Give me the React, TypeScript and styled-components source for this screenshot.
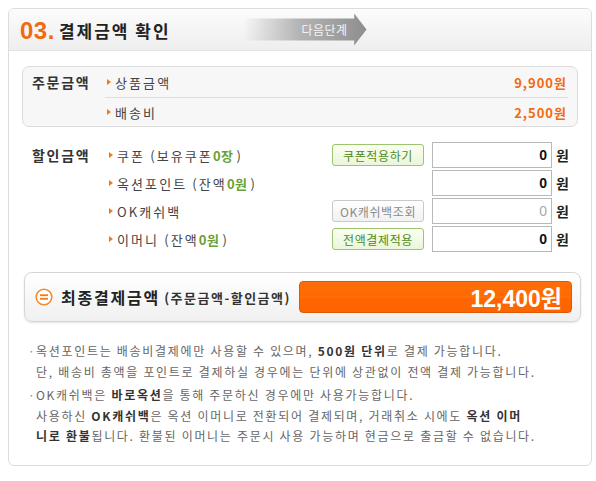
import React from 'react';
import styled, { createGlobalStyle } from 'styled-components';

const GlobalStyle = createGlobalStyle`
  body {
    margin: 0;
    background: #fff;
    font-family: "Noto Sans CJK KR", "Noto Sans", sans-serif;
    color: #333;
  }
`;

const Panel = styled.div`
  margin: 8px 0 0 8px;
  width: 582px;
  height: 456px;
  border: 1px solid #dcdcdc;
  border-radius: 6px;
  background: #fff;
  overflow: hidden;
`;

const Header = styled.div`
  height: 41px;
  display: flex;
  align-items: center;
  padding-left: 11px;
  background: linear-gradient(#fcfcfc, #eeeeee);
  border-bottom: 1px solid #e3e3e3;
`;

const StepNo = styled.span`
  font-family: "Liberation Sans", Arial, sans-serif;
  font-weight: 700;
  font-size: 24px;
  letter-spacing: 0.5px;
  color: #f26a10;
  margin-right: 4px;
  padding-top: 2px;
`;

const Title = styled.span`
  font-weight: 700;
  font-size: 17px;
  color: #222;
  letter-spacing: 2px;
  padding-top: 2px;
`;

const NextStep = styled.div`
  margin-left: 72px;
  width: 124px;
  height: 32px;
  display: flex;
  align-items: center;
  justify-content: flex-end;
  padding-right: 19px;
  box-sizing: border-box;
  font-size: 12px;
  color: #f4f4f4;
  letter-spacing: 0.5px;
  background: linear-gradient(to right, rgba(150, 150, 150, 0) 0%, #b4b4b4 45%, #8e8e8e 100%);
  clip-path: polygon(0 16%, 90% 16%, 90% 0, 100% 50%, 90% 100%, 90% 84%, 0 84%);
`;

const Body = styled.div`
  padding: 15px 13px 0 13px;
`;

const OrderBox = styled.div`
  display: grid;
  grid-template-columns: 73px 1fr;
  border: 1px solid #dddddd;
  border-radius: 7px;
  background: #f7f7f7;
  padding: 0 9px 0 9px;
`;

const GroupLabel = styled.div`
  font-weight: 700;
  font-size: 14px;
  color: #333;
  letter-spacing: 1.7px;
  line-height: 20px;
  white-space: nowrap;
`;

const OrderLabelCell = styled(GroupLabel)`
  padding-top: 5px;
`;

const OrderRows = styled.div`
  display: flex;
  flex-direction: column;
`;

const OrderRow = styled.div<{ $last?: boolean }>`
  display: flex;
  align-items: center;
  justify-content: space-between;
  height: ${({ $last }) => ($last ? '28px' : '30px')};
  border-bottom: ${({ $last }) => ($last ? 'none' : '1px solid #dedede')};
  padding-right: 1px;
`;

const Item = styled.span`
  display: inline-flex;
  align-items: center;
  font-size: 13px;
  color: #444;
  letter-spacing: 2.1px;
  white-space: nowrap;
`;

const Marker = styled.span`
  display: inline-block;
  width: 0;
  height: 0;
  border-top: 3px solid transparent;
  border-bottom: 3px solid transparent;
  border-left: 4px solid #f07a1a;
  margin: 0 4px 0 2px;
`;

const Amount = styled.span`
  font-weight: 700;
  font-size: 13px;
  color: #f26a10;
  letter-spacing: 1px;
`;

const Green = styled.b`
  color: #6aa133;
  font-weight: 700;
  letter-spacing: 0.5px;
  margin: 0 3px 0 0;
`;

const DiscountSection = styled.div`
  margin-top: 15px;
  padding-left: 10px;
  display: grid;
  grid-template-columns: 73px 227px 100px 120px auto;
  row-gap: 2px;
  align-items: center;
`;

const DiscountLabel = styled(GroupLabel)`
  grid-row: 1;
`;

const DiscountItem = styled(Item)`
  grid-column: 2;
  padding-left: 2px;
`;

const SmallButton = styled.button<{ $muted?: boolean }>`
  grid-column: 3;
  justify-self: start;
  height: 22px;
  width: 92px;
  padding: 0;
  box-sizing: border-box;
  font-family: inherit;
  font-size: 12px;
  letter-spacing: 0.6px;
  border-radius: 3px;
  border: 1px solid ${({ $muted }) => ($muted ? '#c9c9c9' : '#9dc46e')};
  color: ${({ $muted }) => ($muted ? '#8a8a8a' : '#4f8a1c')};
  background: ${({ $muted }) =>
    $muted ? 'linear-gradient(#ffffff, #f1f1f1)' : 'linear-gradient(#fbfff3, #eaf5d9)'};
`;

const AmountInput = styled.div<{ $muted?: boolean }>`
  grid-column: 4;
  width: 120px;
  height: 26px;
  box-sizing: border-box;
  border: 1px solid #b8b8b8;
  background: #fff;
  display: flex;
  align-items: center;
  justify-content: flex-end;
  padding-right: 4px;
  font-family: "Liberation Sans", Arial, sans-serif;
  font-weight: ${({ $muted }) => ($muted ? 400 : 700)};
  font-size: 14px;
  color: ${({ $muted }) => ($muted ? '#aaa' : '#111')};
`;

const Won = styled.span`
  grid-column: 5;
  padding-left: 4px;
  font-weight: 700;
  font-size: 14px;
  color: #222;
`;

const FinalBox = styled.div`
  margin: 20px -3px 0 2px;
  height: 50px;
  box-sizing: border-box;
  display: flex;
  align-items: center;
  padding: 0 8px 0 10px;
  border: 1px solid #d6d6d6;
  border-radius: 8px;
  background: linear-gradient(#ffffff, #f0f0f0);
  box-shadow: 0 1px 2px rgba(0, 0, 0, 0.12);
`;

const FinalLabel = styled.span`
  margin-left: 8px;
  font-weight: 700;
  font-size: 16px;
  letter-spacing: 1.8px;
  color: #222;
`;

const FinalSub = styled.span`
  margin-left: 4px;
  font-weight: 700;
  font-size: 13px;
  letter-spacing: 1.5px;
  color: #333;
`;

const TotalBar = styled.div`
  margin-left: auto;
  width: 273px;
  height: 32px;
  box-sizing: border-box;
  border: 1px solid #e05a00;
  border-radius: 4px;
  background: linear-gradient(#ff6e0a 0%, #ff6a00 48%, #ff8a33 50%, #ff6600 52%, #fb6400 100%);
  display: flex;
  align-items: center;
  justify-content: flex-end;
  padding-right: 9px;
  font-family: "Liberation Sans", Arial, "Noto Sans CJK KR", sans-serif;
  font-weight: 700;
  font-size: 23px;
  color: #fff;
`;

const Notes = styled.div`
  margin-top: 19px;
  display: flex;
  flex-direction: column;
  gap: 3px;
`;

const Note = styled.p`
  position: relative;
  margin: 0;
  padding-left: 14px;
  font-size: 12px;
  line-height: 20.5px;
  color: #666;
  letter-spacing: 1.7px;
  white-space: nowrap;

  &::before {
    content: '·';
    position: absolute;
    left: 6px;
    top: 0;
    color: #888;
  }

  b {
    color: #333;
    font-weight: 700;
  }
`;

const EqualIcon = () => (
  <svg width="18" height="18" viewBox="0 0 18 18">
    <circle cx="9" cy="9" r="7.8" fill="#fff" stroke="#f58a2e" strokeWidth="1.6" />
    <rect x="5" y="6.3" width="8" height="1.8" fill="#f47a18" />
    <rect x="5" y="9.9" width="8" height="1.8" fill="#f47a18" />
  </svg>
);

type DiscountLine = {
  item: React.ReactNode;
  button?: string;
  muted?: boolean;
};

const discounts: DiscountLine[] = [
  { item: <>쿠폰 (보유쿠폰 <Green>0장</Green>)</>, button: '쿠폰적용하기' },
  { item: <>옥션포인트 (잔액 <Green>0원</Green>)</> },
  { item: <>OK캐쉬백</>, button: 'OK캐쉬백조회', muted: true },
  { item: <>이머니 (잔액 <Green>0원</Green>)</>, button: '전액결제적용' },
];

export default function App() {
  return (
    <>
      <GlobalStyle />
      <Panel>
        <Header>
          <StepNo>03.</StepNo>
          <Title>결제금액 확인</Title>
          <NextStep>다음단계</NextStep>
        </Header>
        <Body>
          <OrderBox>
            <OrderLabelCell>주문금액</OrderLabelCell>
            <OrderRows>
              <OrderRow>
                <Item><Marker />상품금액</Item>
                <Amount>9,900원</Amount>
              </OrderRow>
              <OrderRow $last>
                <Item><Marker />배송비</Item>
                <Amount>2,500원</Amount>
              </OrderRow>
            </OrderRows>
          </OrderBox>

          <DiscountSection>
            <DiscountLabel>할인금액</DiscountLabel>
            {discounts.map((d, i) => (
              <React.Fragment key={i}>
                <DiscountItem style={{ gridRow: i + 1 }}><Marker />{d.item}</DiscountItem>
                {d.button ? (
                  <SmallButton $muted={d.muted} style={{ gridRow: i + 1 }}>{d.button}</SmallButton>
                ) : null}
                <AmountInput $muted={d.muted} style={{ gridRow: i + 1 }}>0</AmountInput>
                <Won style={{ gridRow: i + 1 }}>원</Won>
              </React.Fragment>
            ))}
          </DiscountSection>

          <FinalBox>
            <EqualIcon />
            <FinalLabel>최종결제금액</FinalLabel>
            <FinalSub>(주문금액-할인금액)</FinalSub>
            <TotalBar>12,400원</TotalBar>
          </FinalBox>

          <Notes>
            <Note>
              옥션포인트는 배송비결제에만 사용할 수 있으며, <b>500원 단위</b>로 결제 가능합니다.<br />
              단, 배송비 총액을 포인트로 결제하실 경우에는 단위에 상관없이 전액 결제 가능합니다.
            </Note>
            <Note>
              OK캐쉬백은 <b>바로옥션</b>을 통해 주문하신 경우에만 사용가능합니다.<br />
              사용하신 <b>OK캐쉬백</b>은 옥션 이머니로 전환되어 결제되며, 거래취소 시에도 <b>옥션 이머</b><br />
              <b>니로 환불</b>됩니다. 환불된 이머니는 주문시 사용 가능하며 현금으로 출금할 수 없습니다.
            </Note>
          </Notes>
        </Body>
      </Panel>
    </>
  );
}
